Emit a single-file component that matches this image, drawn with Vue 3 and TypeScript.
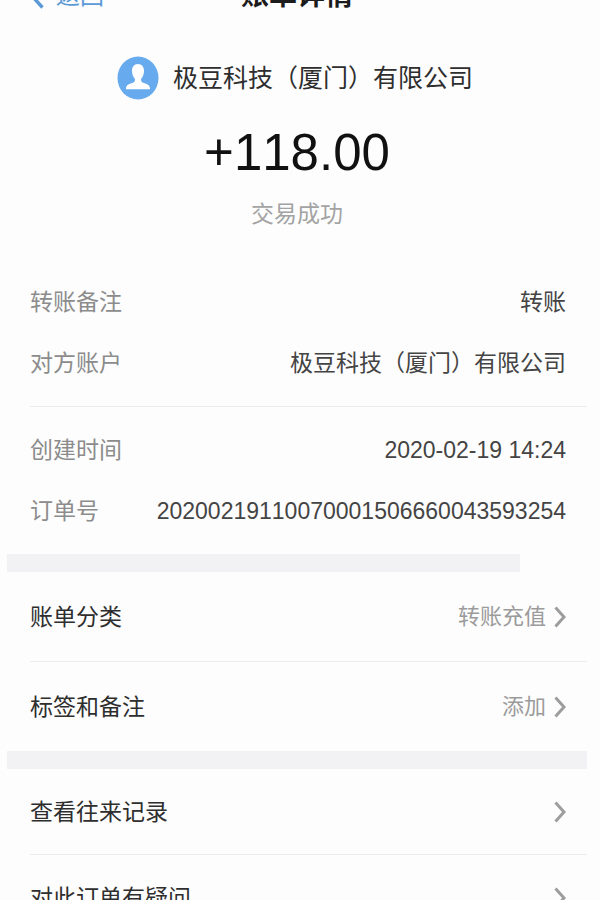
<script setup lang="ts">
interface Detail {
  label: string
  value: string
}

interface Entry {
  label: string
  hint?: string
}

const company = '极豆科技（厦门）有限公司'

const detailGroups: Detail[][] = [
  [
    { label: '转账备注', value: '转账' },
    { label: '对方账户', value: company },
  ],
  [
    { label: '创建时间', value: '2020-02-19 14:24' },
    { label: '订单号', value: '20200219110070001506660043593254' },
  ],
]

const manageEntries: Entry[] = [
  { label: '账单分类', hint: '转账充值' },
  { label: '标签和备注', hint: '添加' },
]

const helpEntries: Entry[] = [
  { label: '查看往来记录' },
  { label: '对此订单有疑问' },
]
</script>

<template>
  <div class="page">
    <header class="nav">
      <a class="back" href="#">
        <svg class="back-icon" viewBox="0 0 14 26" aria-hidden="true">
          <path d="M12.500 1.500 2 13l10.500 11.500" fill="none" stroke="currentColor" stroke-width="3.400" />
        </svg>
        <span>返回</span>
      </a>
      <h1 class="title">账单详情</h1>
    </header>

    <main>
      <section class="summary">
        <div class="party">
          <svg class="avatar" viewBox="0 0 42 44" aria-hidden="true">
            <ellipse cx="21" cy="22" rx="20.5" ry="21.5" fill="#67abee" />
            <path
              d="M21 8c-3.700 0-6 2.800-6 6.800 0 3.700 1.200 6.300 2.900 8v1.900c-.5 1.500-2 2.100-4.300 2.900C10.300 28.700 9 30 9 33.300h24c0-3.300-1.300-4.600-4.600-5.700-2.300-.8-3.800-1.400-4.300-2.900v-1.900c1.700-1.700 2.900-4.300 2.900-8C27 10.800 24.700 8 21 8z"
              fill="#fff"
            />
          </svg>
          <span class="company">{{ company }}</span>
        </div>
        <p class="amount">+118.00</p>
        <p class="status">交易成功</p>
      </section>

      <dl v-for="(group, i) in detailGroups" :key="i" class="details">
        <div v-for="item in group" :key="item.label" class="detail">
          <dt>{{ item.label }}</dt>
          <dd>{{ item.value }}</dd>
        </div>
      </dl>

      <div class="band band-short"></div>

      <nav class="entries entries-tall">
        <a v-for="entry in manageEntries" :key="entry.label" class="entry" href="#">
          <span class="entry-label">{{ entry.label }}</span>
          <span class="hint">{{ entry.hint }}</span>
          <svg class="chevron" viewBox="0 0 12 22" aria-hidden="true">
            <path d="M1.500 1.500 10 11 1.500 20.500" fill="none" stroke="currentColor" stroke-width="3" />
          </svg>
        </a>
      </nav>

      <div class="band"></div>

      <nav class="entries">
        <a v-for="entry in helpEntries" :key="entry.label" class="entry" href="#">
          <span class="entry-label">{{ entry.label }}</span>
          <svg class="chevron" viewBox="0 0 12 22" aria-hidden="true">
            <path d="M1.500 1.500 10 11 1.500 20.500" fill="none" stroke="currentColor" stroke-width="3" />
          </svg>
        </a>
      </nav>
    </main>
  </div>
</template>

<style>
html {
  scrollbar-width: none;
  background: #fdfdfd;
}
</style>

<style scoped>
.page {
  padding: 0 13px 0 7px;
  overflow: hidden;
  background: #fdfdfd;
  color: #2e2e2e;
  font-family: "Liberation Sans", "Noto Sans CJK SC", sans-serif;
  font-size: 23px;
  font-kerning: none;
  line-height: 32px;
}

/* The bar is scrolled mostly out of view above the summary. */
.nav {
  display: grid;
  grid-template-columns: 1fr auto 1fr;
  align-items: center;
  height: 44px;
  margin-top: -26px;
  padding: 0 23px;
}

.back {
  display: flex;
  align-items: center;
  gap: 12px;
  color: #5b9ad6;
  font-size: 24px;
  text-decoration: none;
}

.back-icon {
  width: 14px;
  height: 26px;
}

.title {
  margin: 0;
  color: #1c1c1c;
  font-size: 28px;
  font-weight: 700;
}

.summary {
  display: flex;
  flex-direction: column;
  align-items: center;
  padding: 38px 0 28px;
}

.party {
  display: flex;
  align-items: center;
  gap: 14px;
  padding-right: 4px;
}

.avatar {
  width: 42px;
  height: 44px;
}

.company {
  font-size: 25px;
}

.amount {
  margin: 23px 0 0;
  color: #111;
  font-size: 51px;
  line-height: 60px;
}

.status {
  margin: 15px 0 0;
  color: #a3a3a3;
}

.details {
  margin: 0;
  padding: 13px 21px 13px 23px;
}

.details + .details {
  position: relative;
}

.details + .details::before {
  content: "";
  position: absolute;
  top: 0;
  right: 0;
  left: 23px;
  height: 1px;
  background: #ececec;
}

.detail {
  display: flex;
  align-items: center;
  justify-content: space-between;
  height: 61px;
}

dt {
  color: #8c8c8c;
}

dd {
  margin: 0;
  color: #444;
}

.band {
  height: 18px;
  background: #f2f2f4;
}

.band-short {
  margin-right: 67px;
}

.entries {
  padding-left: 23px;
}

.entry {
  display: flex;
  align-items: center;
  gap: 8px;
  height: 85px;
  padding-right: 21px;
  color: inherit;
  text-decoration: none;
}

.entries-tall .entry {
  height: 89px;
}

.entry + .entry {
  border-top: 1px solid #ececec;
}

.entry-label {
  flex: 1;
}

.hint {
  color: #9b9b9b;
  font-size: 22px;
}

.chevron {
  width: 12px;
  height: 22px;
  color: #9d9d9d;
}
</style>
